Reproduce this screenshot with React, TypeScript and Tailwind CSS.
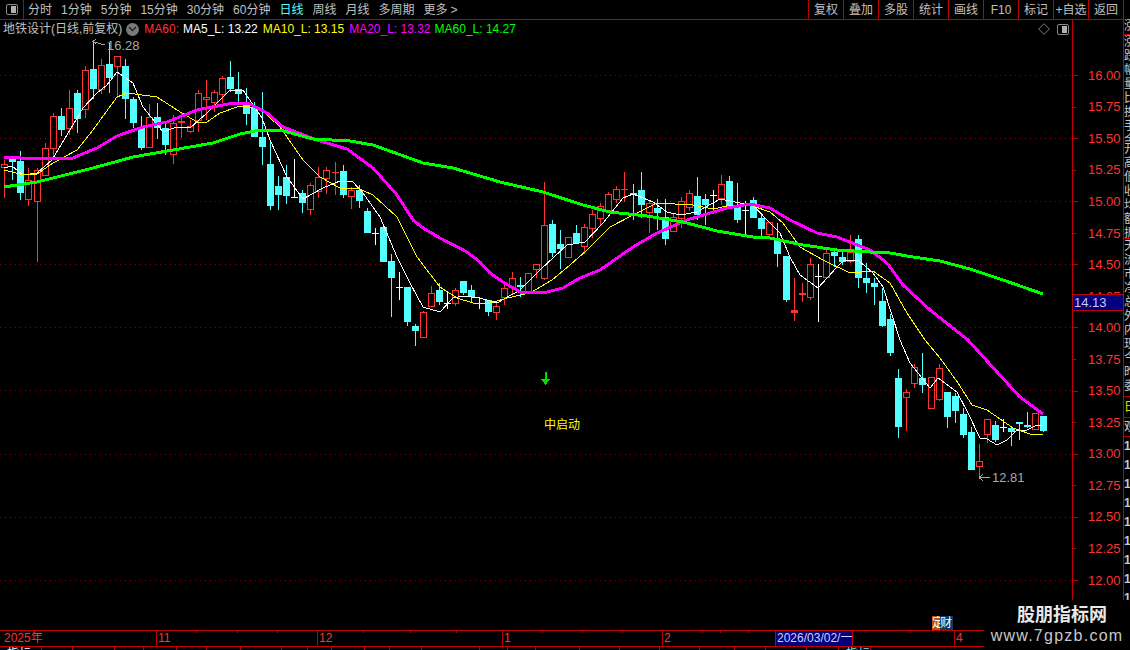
const RED = "#ff3232";
const CYAN = "#54ffff";

// kind, high, body top, body bottom, low (page y pixels), one entry per trading day
type Kind = "r" | "c" | "w" | "f";
const candles: [Kind, number, number, number, number][] = [
  ["r", 160, 164, 167, 198], ["c", 157, 158, 162, 180], ["c", 151, 161, 193, 200], ["r", 168, 180, 199, 206],
  ["r", 168, 170, 201, 262], ["r", 143, 148, 175, 176], ["r", 113, 116, 148, 160], ["c", 108, 116, 130, 136],
  ["r", 90, 108, 128, 135], ["c", 90, 93, 119, 133], ["r", 66, 70, 109, 118], ["c", 40, 69, 89, 99],
  ["r", 59, 65, 89, 94], ["c", 43, 64, 78, 93], ["r", 56, 56, 66, 98], ["c", 59, 66, 99, 119],
  ["c", 97, 99, 123, 128], ["c", 116, 127, 148, 150], ["r", 104, 117, 147, 147], ["c", 103, 117, 128, 139],
  ["c", 123, 128, 145, 155], ["r", 115, 123, 154, 164], ["f", 113, 121, 123, 138], ["r", 120, 126, 131, 133],
  ["r", 90, 93, 120, 132], ["r", 80, 97, 99, 120], ["r", 90, 92, 102, 112], ["r", 76, 78, 94, 103],
  ["c", 61, 77, 89, 92], ["c", 72, 89, 94, 103], ["c", 88, 103, 114, 125], ["c", 102, 107, 137, 137],
  ["c", 92, 137, 147, 165], ["c", 140, 164, 206, 210], ["c", 176, 186, 195, 210], ["c", 165, 177, 196, 204],
  ["w", 159, 197, 197, 198], ["c", 190, 193, 203, 213], ["r", 183, 185, 209, 215], ["r", 167, 177, 191, 198],
  ["r", 167, 170, 178, 194], ["f", 162, 172, 173, 195], ["c", 165, 171, 195, 198], ["r", 187, 190, 196, 209],
  ["c", 185, 190, 201, 208], ["c", 208, 211, 233, 233], ["w", 228, 233, 233, 245], ["c", 227, 227, 262, 262],
  ["c", 254, 261, 278, 317], ["w", 272, 287, 287, 300], ["c", 287, 287, 322, 326], ["c", 324, 326, 331, 346],
  ["r", 311, 312, 337, 338], ["r", 286, 293, 306, 306], ["c", 283, 290, 302, 305], ["w", 292, 303, 303, 309],
  ["r", 288, 290, 303, 306], ["c", 281, 281, 293, 295], ["c", 285, 290, 297, 302], ["w", 297, 303, 303, 309],
  ["c", 300, 300, 312, 316], ["r", 303, 306, 312, 320], ["r", 283, 288, 297, 305], ["r", 272, 278, 287, 295],
  ["c", 277, 285, 287, 297], ["r", 273, 273, 293, 294], ["r", 264, 264, 269, 278], ["r", 182, 225, 278, 280],
  ["c", 220, 224, 253, 257], ["c", 230, 244, 249, 269], ["r", 237, 237, 257, 257], ["c", 225, 233, 243, 243],
  ["r", 224, 227, 246, 254], ["r", 210, 214, 228, 238], ["r", 203, 206, 218, 225], ["r", 192, 194, 210, 212],
  ["r", 186, 189, 199, 203], ["f", 172, 189, 190, 202], ["c", 184, 193, 195, 220], ["c", 172, 190, 205, 218],
  ["r", 200, 203, 212, 233], ["c", 199, 208, 213, 230], ["c", 199, 217, 239, 245], ["r", 213, 217, 231, 231],
  ["r", 197, 201, 218, 228], ["r", 190, 193, 207, 211], ["c", 177, 196, 215, 220], ["c", 194, 199, 205, 225],
  ["w", 190, 195, 195, 210], ["r", 175, 184, 198, 205], ["c", 176, 181, 207, 207], ["c", 183, 207, 220, 223],
  ["w", 201, 210, 210, 235], ["c", 197, 200, 218, 218], ["c", 213, 218, 229, 239], ["r", 222, 222, 234, 238],
  ["c", 223, 239, 254, 267], ["c", 256, 256, 300, 302], ["f", 278, 310, 313, 321], ["f", 283, 293, 295, 302],
  ["r", 258, 264, 297, 300], ["w", 264, 276, 276, 322], ["r", 250, 253, 277, 277], ["c", 248, 252, 256, 267],
  ["c", 252, 257, 262, 265], ["r", 235, 252, 261, 263], ["c", 235, 239, 278, 288], ["c", 263, 278, 283, 293],
  ["c", 278, 283, 287, 305], ["c", 288, 301, 326, 327], ["c", 314, 319, 353, 356], ["c", 369, 378, 427, 438],
  ["r", 389, 392, 397, 431], ["r", 364, 367, 383, 388], ["c", 353, 378, 385, 393], ["r", 377, 377, 408, 408],
  ["r", 364, 368, 399, 401], ["c", 392, 392, 417, 428], ["c", 393, 396, 411, 423], ["c", 408, 414, 435, 438],
  ["c", 427, 432, 470, 470], ["r", 444, 461, 466, 477], ["r", 419, 419, 434, 443], ["c", 421, 425, 440, 442],
  ["w", 419, 427, 427, 432], ["c", 426, 428, 432, 446], ["c", 422, 422, 423, 440], ["c", 412, 425, 427, 428],
  ["r", 413, 413, 429, 430], ["c", 416, 416, 431, 432],
];

const ma5 = "4,168 12,166 23,175 37,173 52,160 70,130 83,108 97,93 107,85 117,72 133,83 143,107 163,132 177,127 190,128 207,113 230,90 243,90 262,118 270,140 287,177 303,199 323,188 340,181 353,182 363,193 380,217 397,257 410,283 423,307 440,312 453,298 463,296 480,298 497,303 520,290 540,270 567,245 585,242 603,223 623,198 633,194 653,202 667,212 680,215 697,212 720,199 740,203 753,205 767,220 780,233 790,257 800,275 818,288 837,267 843,261 858,260 873,273 883,287 900,340 910,363 930,388 938,378 957,392 968,413 980,438 987,439 997,445 1007,440 1017,430 1027,430 1035,426 1043,425";
const ma10 = "4,170 20,174 37,174 53,163 77,150 93,130 117,97 127,93 157,97 177,110 197,122 207,122 220,113 240,106 260,108 280,127 303,160 320,177 340,188 357,188 373,195 397,217 417,257 440,287 457,298 473,303 487,304 507,298 530,293 552,280 570,265 587,250 610,227 633,215 657,203 693,205 713,209 727,206 750,205 770,212 783,223 800,247 823,260 850,273 873,271 890,283 907,313 925,340 940,358 958,383 972,405 987,410 1013,428 1033,435 1043,434";
const ma20 = "4,157 37,159 73,158 97,148 117,136 143,127 167,122 197,110 233,103 250,104 267,113 283,127 317,140 347,149 373,168 397,195 413,220 423,228 440,238 467,252 480,262 490,273 503,282 520,292 530,293 547,292 563,288 580,278 600,270 633,247 657,233 687,220 707,214 727,208 750,204 770,208 790,220 817,233 837,237 870,250 887,263 903,285 930,310 968,340 997,372 1020,397 1043,414";
const ma60 = "4,187 37,182 93,168 133,157 173,150 213,143 240,134 260,130 280,130 313,139 350,141 373,145 423,163 453,168 500,182 543,192 583,205 610,212 647,216 683,222 717,231 753,237 770,238 803,245 837,250 870,252 890,253 913,257 940,261 970,269 1003,280 1043,294";

const tabs = ["分时", "1分钟", "5分钟", "15分钟", "30分钟", "60分钟", "日线", "周线", "月线", "多周期", "更多"];
const tools = ["复权", "叠加", "多股", "统计", "画线", "F10", "标记", "+自选", "返回"];
const prices = ["16.00", "15.75", "15.50", "15.25", "15.00", "14.75", "14.50", "14.25", "14.00", "13.75", "13.50", "13.25", "13.00", "12.75", "12.50", "12.25", "12.00"];
const gridY = [75, 138, 201, 264, 327, 390, 454, 517, 580];
const dayTicks = [196, 237, 277, 363, 410, 456, 542, 582, 622, 702, 720, 748, 865, 910, 1000];
const bottomCells = [
  { w: "w-[42px]", t: "指标" }, { w: "w-[31px]", t: "" }, { w: "w-[42px]", t: "" }, { w: "w-[29px]", t: "" },
  { w: "w-[33px]", t: "" }, { w: "w-[30px]", t: "" }, { w: "w-[34px]", t: "" }, { w: "w-[41px]", t: "" },
  { w: "w-[26px]", t: "" }, { w: "w-[24px]", t: "" }, { w: "w-[33px]", t: "" }, { w: "w-[25px]", t: "" },
  { w: "w-[32px]", t: "" }, { w: "w-[58px]", t: "" }, { w: "w-[28px]", t: "" }, { w: "w-[28px]", t: "" },
  { w: "w-[44px]", t: "" }, { w: "w-[40px]", t: "" }, { w: "w-[40px]", t: "" }, { w: "w-[40px]", t: "" },
  { w: "w-[35px]", t: "" }, { w: "w-[31px]", t: "" }, { w: "w-[41px]", t: "" }, { w: "w-[32px]", t: "" },
  { w: "w-[32px]", t: "指标" },
];

function PanelIcon() {
  return (
    <div className="flex h-[11px] w-[12px] justify-end rounded-[2px] border border-[#8a8a8a] p-px">
      <div className="h-full w-[5px] bg-[#b0b0b0]" />
    </div>
  );
}

function Candle({ c, i }: { c: (typeof candles)[number]; i: number }) {
  const [kind, high, top, bot, low] = c;
  const x = Math.round(4.3 + i * 8.054) + 0.5;
  if (kind === "c") {
    return (
      <g>
        <line x1={x} x2={x} y1={high} y2={low} stroke={CYAN} />
        <rect x={x - 3.5} y={top} width={7} height={Math.max(bot - top, 2)} fill={CYAN} />
      </g>
    );
  }
  if (kind === "w") {
    return (
      <g stroke="#ffffff">
        <line x1={x} x2={x} y1={high} y2={low} />
        <line x1={x - 3.5} x2={x + 3.5} y1={top + 0.5} y2={top + 0.5} />
      </g>
    );
  }
  if (kind === "f") {
    return (
      <g>
        <line x1={x} x2={x} y1={high} y2={low} stroke={RED} />
        <rect x={x - 3.5} y={top} width={7} height={bot - top} fill={RED} />
      </g>
    );
  }
  return (
    <g stroke={RED} fill="none">
      <line x1={x} x2={x} y1={high} y2={top} />
      <line x1={x} x2={x} y1={bot} y2={low} />
      <rect x={x - 3} y={top + 0.5} width={6} height={bot - top} />
    </g>
  );
}

function Chart() {
  return (
    <svg width={1072} height={592} viewBox="0 38 1072 592" className="block" shapeRendering="crispEdges">
      {gridY.map((y) => (
        <line key={y} x1={0} x2={1072} y1={y + 0.5} y2={y + 0.5} stroke="#a00000" strokeDasharray="1 4" />
      ))}
      {candles.map((c, i) => (
        <Candle key={i} c={c} i={i} />
      ))}
      <polyline points={ma5} fill="none" stroke="#ffffff" strokeWidth={1} />
      <polyline points={ma10} fill="none" stroke="#ffff00" strokeWidth={1} />
      <polyline points={ma20} fill="none" stroke="#ff00ff" strokeWidth={3} />
      <polyline points={ma60} fill="none" stroke="#00ff00" strokeWidth={3} />

      {/* high / low markers */}
      <g stroke="#a8a8a8" fill="none">
        <path d="M92.5 41.5 L105 45 M92.5 41.5 L96 39.5 M92.5 41.5 L96 43.5" />
        <path d="M979 477.5 L990 477.5 M979 477.5 L983 474.5 M979 477.5 L983 480.5" />
      </g>
      <text x={107} y={50} fill="#a8a8a8" fontSize={13} fontFamily="'Liberation Sans'">16.28</text>
      <text x={992} y={482} fill="#a8a8a8" fontSize={13} fontFamily="'Liberation Sans'">12.81</text>

      {/* signal */}
      <path d="M544.5 372 H546.5 V379 H550 L545.5 385 L541 379 H544.5 Z" fill="#00e000" />
      <text x={544} y={429} fill="#ffff00" fontSize={12} fontFamily="'Liberation Sans','Noto Sans CJK SC',sans-serif">中启动</text>
    </svg>
  );
}

function SidePanel() {
  const sections = [
    { h: "h-[16px]", rows: ["涨"], c: "text-[#c8c8c8] leading-[14px]" },
    { h: "h-[107px]", rows: ["涨", "跌", "幅", "量", "比", "换", "手", "金"], c: "text-[#c8c8c8] leading-[14px]" },
    { h: "h-[97px]", rows: ["开", "高", "低", "收", "均", "额", "振"], c: "text-[#c8c8c8] leading-[14px]" },
    { h: "h-[158px]", rows: ["天", "流", "市", "净", "总", "外", "内", "现", "今", "昨", "委"], c: "text-[#c8c8c8] leading-[14px]" },
    { h: "h-[21px]", rows: ["日"], c: "text-[#e0e000] leading-[20px]" },
    { h: "h-[19px]", rows: ["观"], c: "text-[#c8c8c8] leading-[18px]" },
    { h: "h-[190px]", rows: ["1", "1", "1", "1", "1", "1", "1", "1", "1"], c: "text-[#c8c8c8] font-bold leading-[19px]" },
  ];
  return (
    <div className="h-[630px] w-[7px] shrink-0 overflow-hidden border-l border-[#c00000] pt-[19px]">
      {sections.map((s, i) => (
        <div key={i} className={`${s.h} w-[30px] overflow-hidden border-b border-[#c00000] text-[12px] ${s.c}`}>
          {s.rows.map((r, j) => (
            <div key={j}>{r}</div>
          ))}
        </div>
      ))}
    </div>
  );
}

export default function App() {
  return (
    <div className="relative h-[650px] w-[1130px] overflow-hidden bg-black text-[12px] text-[#c0c0c0] [font-family:'Liberation_Sans','Noto_Sans_CJK_SC',sans-serif]">
      <div className="flex">
        <div className="w-[1123px]">
          {/* top toolbar */}
          <div className="flex h-[20px] items-center border-b border-[#c00000]">
            <div className="flex h-[19px] w-[24px] items-center justify-center border-r border-[#c00000]">
              <PanelIcon />
            </div>
            <div className="flex items-center gap-[9px] pl-[4px]">
              {tabs.map((t) => (
                <span key={t} className={t === "日线" ? "text-[#54ffff]" : ""}>
                  {t}
                  {t === "更多" && <span className="ml-[3px]">&gt;</span>}
                </span>
              ))}
            </div>
            <div className="ml-auto flex h-[19px]">
              {tools.map((t) => (
                <div key={t} className="flex w-[35px] items-center justify-center whitespace-nowrap border-l border-[#c00000]">
                  {t}
                </div>
              ))}
            </div>
          </div>

          <div className="flex h-[610px]">
            {/* chart */}
            <div className="w-[1072px] shrink-0">
              <div className="flex h-[18px] items-center pl-[3px] pr-[3px]">
                <span>地铁设计(日线,前复权)</span>
                <span className="ml-[4px] flex h-[13px] w-[13px] items-center justify-center rounded-full bg-[#7a7a7a]">
                  <svg width="9" height="6" viewBox="0 0 9 6">
                    <path d="M1 1 L4.5 4.5 L8 1" stroke="#222" strokeWidth="1.4" fill="none" />
                  </svg>
                </span>
                <span className="ml-[5px] text-[#ff3232]">MA60:</span>
                <span className="ml-[4px] text-white">MA5_L: 13.22</span>
                <span className="ml-[5px] text-[#ffff00]">MA10_L: 13.15</span>
                <span className="ml-[5px] text-[#ff00ff]">MA20_L: 13.32</span>
                <span className="ml-[4px] text-[#00ff00]">MA60_L: 14.27</span>
                <svg className="ml-auto" width="12" height="12" viewBox="0 0 12 12">
                  <path d="M6 .7 L11.3 6 L6 11.3 L.7 6 Z" stroke="#7a7a7a" fill="none" />
                </svg>
                <div className="ml-[7px]">
                  <PanelIcon />
                </div>
              </div>
              <Chart />
            </div>

            {/* price axis */}
            <div className="relative w-[51px] border-l border-[#c00000] pt-[39.8px]">
              {prices.map((p, i) => (
                <div key={p} className="flex h-[31.55px] items-center text-[13px] text-[#ff3232]">
                  <div className={`h-px shrink-0 bg-[#c00000] ${i % 2 === 0 ? "w-[5px]" : "w-[3px]"}`} />
                  <span className={i % 2 === 0 ? "ml-[10px]" : "ml-[12px]"}>{p}</span>
                </div>
              ))}
              <div className="absolute left-0 top-[274px] flex h-[17px] w-[50px] items-center border-y border-[#c00000] bg-[#000080] pl-[1px] text-[13px] text-[#c8c8f0]">
                14.13
              </div>
            </div>
          </div>
        </div>
        <SidePanel />
      </div>

      {/* date axis */}
      <div className="relative flex h-[17px] border-y border-[#c00000] text-[#ff3232]">
        <div className="w-[156px] pl-[4px] leading-[15px]">2025年</div>
        <div className="w-[161px] border-l border-[#c00000] pl-[1px] leading-[15px]">11</div>
        <div className="w-[185px] border-l border-[#c00000] pl-[1px] leading-[15px]">12</div>
        <div className="w-[160px] border-l border-[#c00000] pl-[1px] leading-[15px]">1</div>
        <div className="w-[113px] border-l border-[#c00000] pl-[1px] leading-[15px]">2</div>
        <div className="w-[78px] border-x border-[#c00000] bg-[#000080] pl-px leading-[15px] whitespace-nowrap text-[#d0d0f8]">2026/03/02/一</div>
        <div className="w-[101px] leading-[15px]" />
        <div className="flex-1 border-l border-[#c00000] pl-[1px] leading-[15px]">4</div>
        <svg className="absolute left-0 top-0" width={1130} height={2}>
          {dayTicks.map((x) => (
            <line key={x} x1={x + 0.5} x2={x + 0.5} y1={0} y2={2} stroke="#c00000" />
          ))}
        </svg>
      </div>

      {/* clipped tab strip at the very bottom */}
      <div className="flex h-[3px] overflow-hidden text-white">
        {bottomCells.map((c, i) => (
          <div key={i} className={`${c.w} shrink-0 border-r border-[#c00000] pl-[7px] leading-[14px] ${i === 24 ? "text-[#54ffff]" : ""}`}>
            {c.t}
          </div>
        ))}
      </div>

      {/* tag above the date axis */}
      <div className="absolute left-[932px] top-[616px] flex h-[14px] text-[12px] leading-[14px] text-white">
        <span className="w-[8px] overflow-hidden bg-[#b8500f]">定</span>
        <span className="w-[13px] overflow-hidden bg-[#0a3a66]">财</span>
      </div>

      {/* watermark */}
      <div className="absolute bottom-0 right-0 flex h-[50px] w-[146px] flex-col items-center bg-black pt-[3px]">
        <div className="ml-[10px] text-[18px] font-bold leading-[24px] text-[#e8e8e8]">股朋指标网</div>
        <div className="text-[16px] leading-[18px] tracking-[1.25px] text-[#c8c8c8] whitespace-nowrap">www.7gpzb.com</div>
      </div>
    </div>
  );
}
